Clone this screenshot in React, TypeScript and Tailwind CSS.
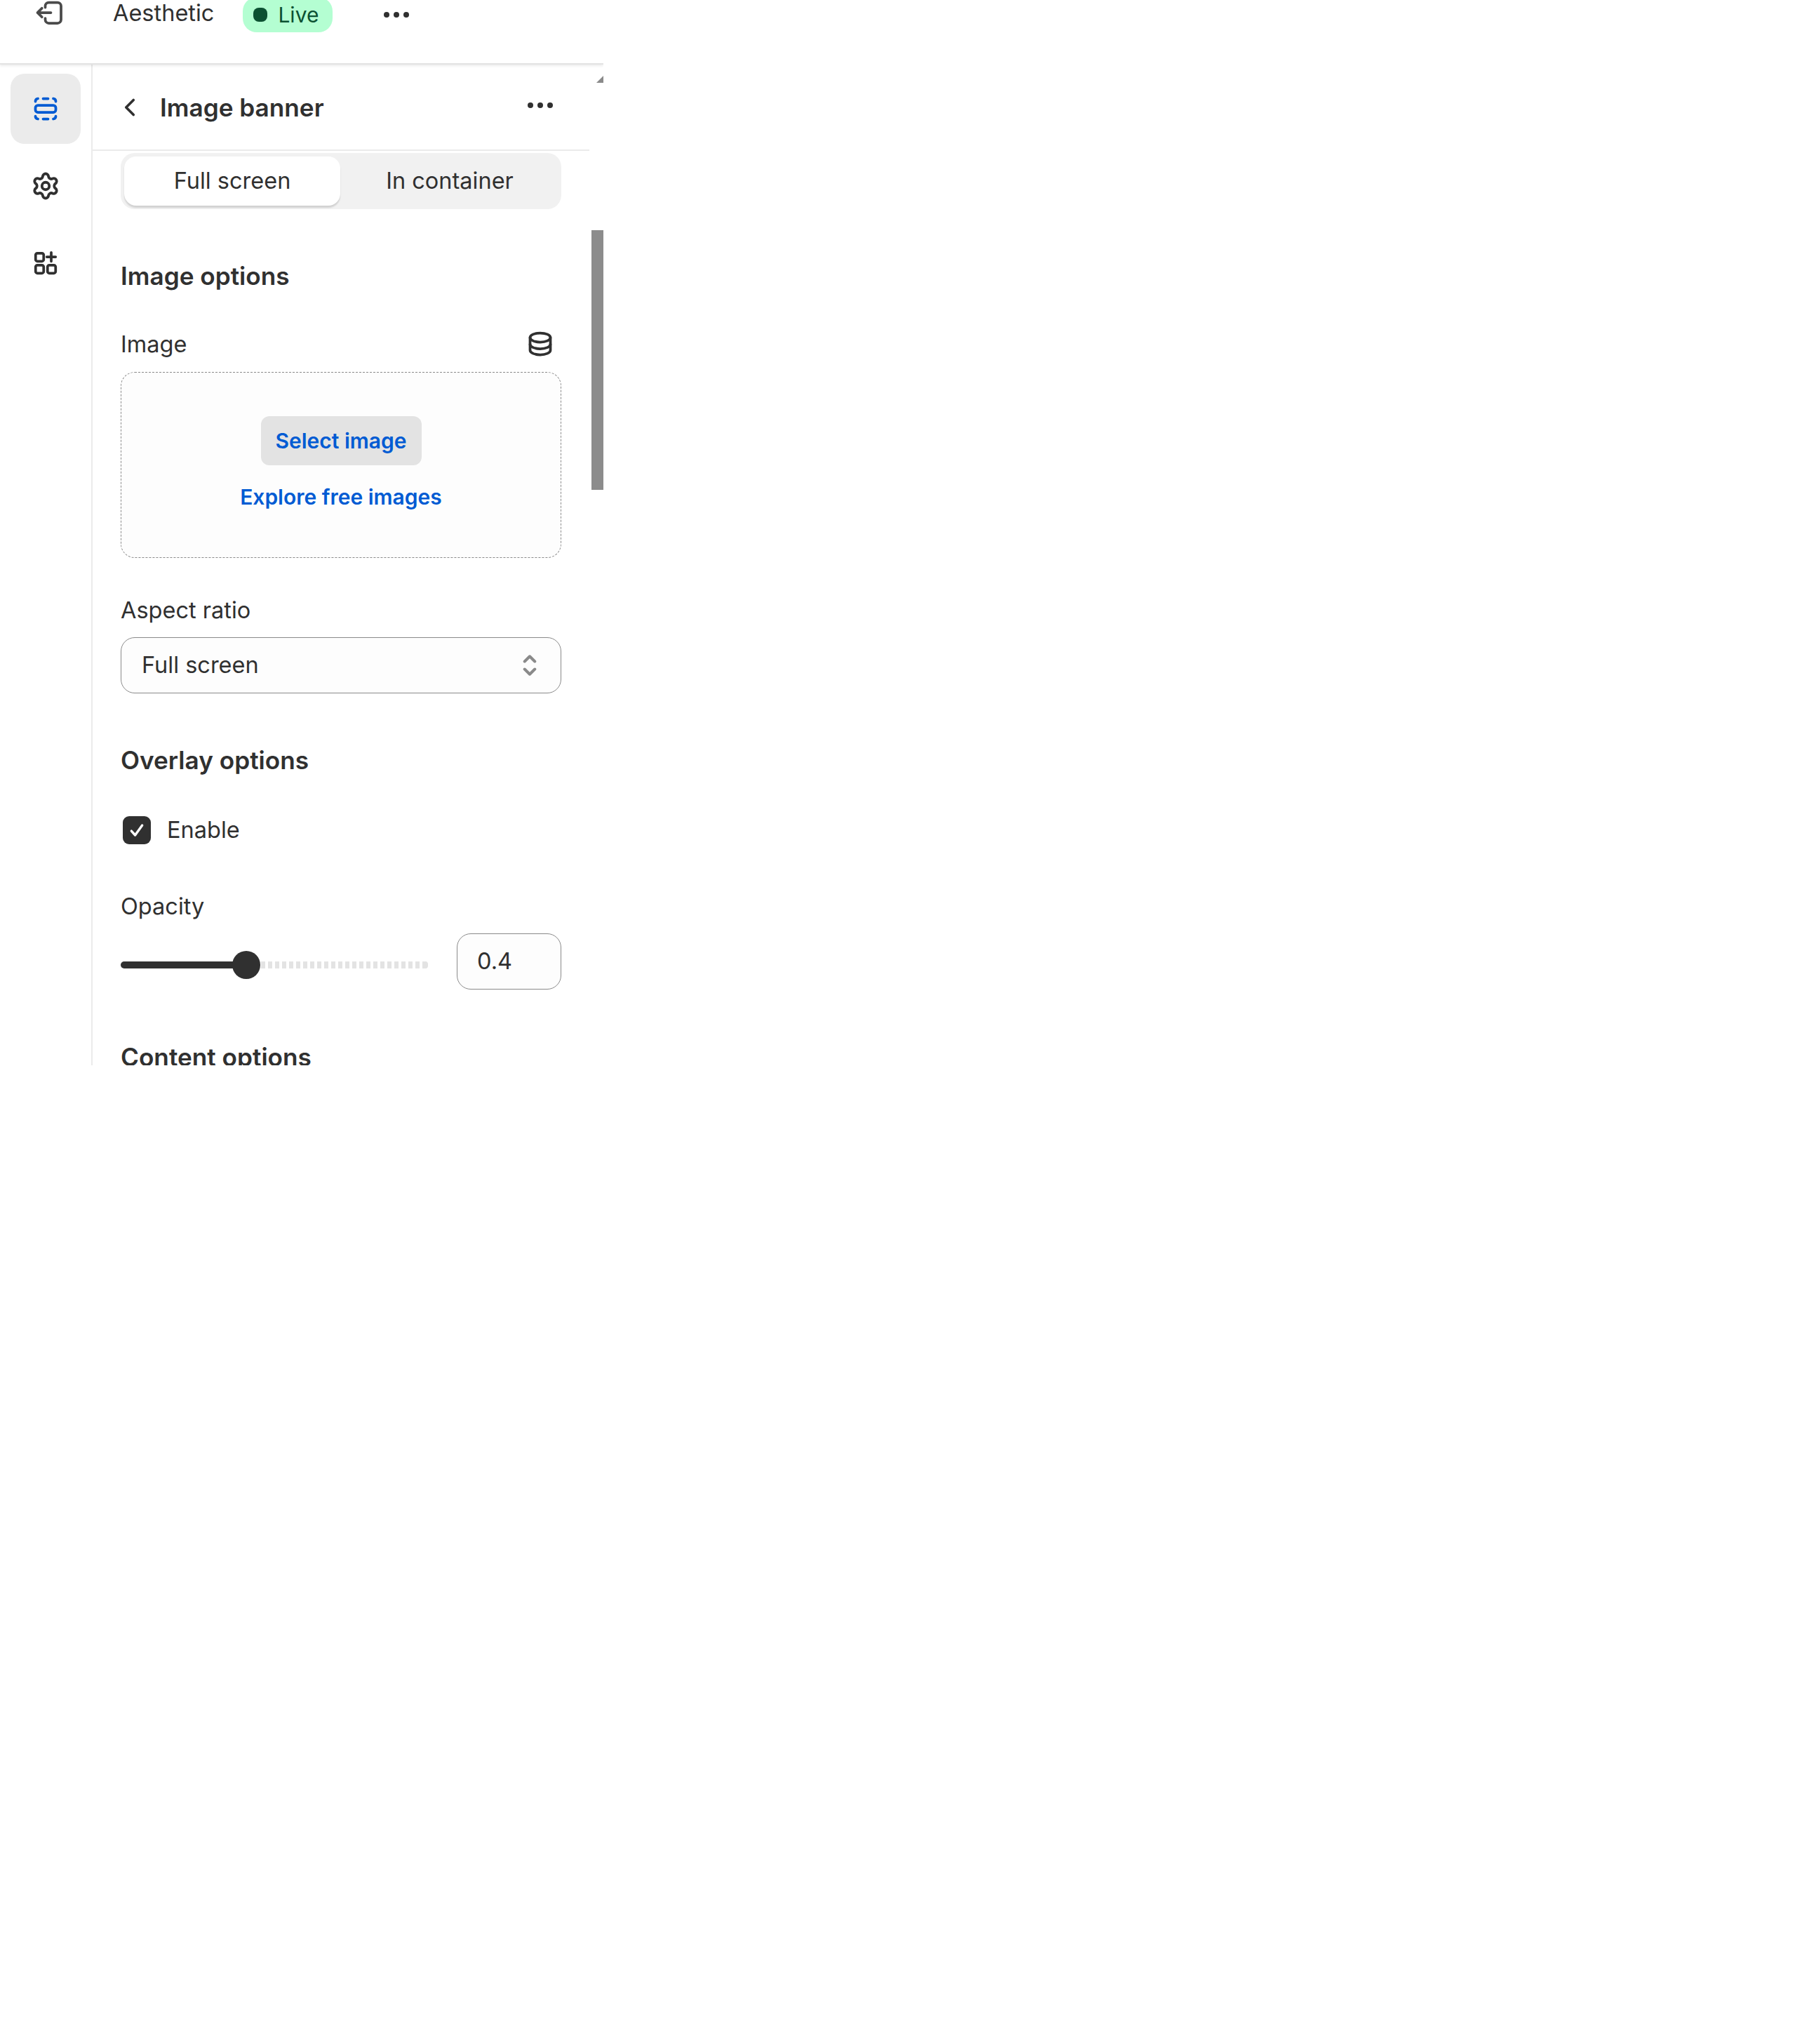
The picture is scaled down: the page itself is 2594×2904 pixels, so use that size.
import React from 'react';
import { ChevronLeft, Settings } from 'lucide-react';

const Dots = () => (
  <div className="flex gap-[6px]">
    <span className="w-[8px] h-[8px] rounded-full bg-[#303030]" />
    <span className="w-[8px] h-[8px] rounded-full bg-[#303030]" />
    <span className="w-[8px] h-[8px] rounded-full bg-[#303030]" />
  </div>
);

const ExitIcon = () => (
  <svg className="w-[50px] h-[50px] shrink-0" viewBox="0 0 20 20" fill="none" stroke="#4a4a4a" strokeWidth="1.5" strokeLinecap="round" strokeLinejoin="round">
    <path d="M7.8 7V6.2a2 2 0 0 1 2-2h5a2 2 0 0 1 2 2v7.8a2 2 0 0 1-2 2h-5a2 2 0 0 1-2-2v-.8" />
    <path d="M11 10H3.4M5.9 7.5 3.4 10l2.5 2.5" />
  </svg>
);

const SectionIcon = () => (
  <svg className="w-[50px] h-[50px]" viewBox="0 0 20 20" fill="none" stroke="#005bd3" strokeWidth="1.5" strokeLinecap="round">
    <rect x="4.2" y="8" width="11.6" height="4" rx="1.4" />
    <path d="M4.2 5.8c0-1 .5-1.5 1.4-1.6M8.6 4.2h2.8M14.4 4.2c.9.1 1.4.6 1.4 1.6" />
    <path d="M4.2 14.2c0 1 .5 1.5 1.4 1.6M8.6 15.8h2.8M14.4 15.8c.9-.1 1.4-.6 1.4-1.6" />
  </svg>
);

const AppsIcon = () => (
  <svg className="w-[50px] h-[50px]" viewBox="0 0 20 20" fill="none" stroke="#303030" strokeWidth="1.5" strokeLinecap="round">
    <rect x="4.3" y="4.3" width="4.6" height="4.6" rx="1" />
    <rect x="4.3" y="11.1" width="4.6" height="4.6" rx="1" />
    <rect x="11.1" y="11.1" width="4.6" height="4.6" rx="1" />
    <path d="M13.2 3.9v5M10.7 6.4h5" />
  </svg>
);

const DatabaseIcon = () => (
  <svg className="w-[50px] h-[50px]" viewBox="0 0 20 20" fill="none" stroke="#303030" strokeWidth="1.5" strokeLinecap="round">
    <ellipse cx="10" cy="6.4" rx="5.8" ry="2.6" />
    <path d="M4.2 6.4v7.2c0 1.5 2.6 2.6 5.8 2.6s5.8-1.1 5.8-2.6V6.4" />
    <path d="M4.2 10.2c0 1.5 2.6 2.6 5.8 2.6s5.8-1.1 5.8-2.6" />
  </svg>
);

const SelectorIcon = () => (
  <svg className="w-[50px] h-[50px]" viewBox="0 0 20 20" fill="none" stroke="#8a8a8a" strokeWidth="1.6" strokeLinecap="round" strokeLinejoin="round">
    <path d="M7.1 7.8 10 4.9l2.9 2.9" />
    <path d="M7.1 12.2 10 15.1l2.9-2.9" />
  </svg>
);

const ticks = Array.from({ length: 24 });

export default function App() {
  return (
    <div className="w-[860px] h-[1518px] overflow-hidden bg-white text-[#303030] text-[32.5px] leading-[50px] font-['Inter',sans-serif]">
      <header className="h-[92px] flex flex-col border-b-2 border-[#e3e3e3] shadow-[0_2px_3px_rgba(0,0,0,0.08)] relative z-10 bg-white">
        <div className="flex items-center h-[50px] -mt-[7px] pl-[45px]">
          <ExitIcon />
          <span className="ml-[66px] mt-[1px]">Aesthetic</span>
          <span className="ml-[41px] mt-[5px] flex items-center h-[50px] pl-[15px] pr-[20px] rounded-[20px] bg-[#b4fed2] text-[#0c5132] text-[30px]">
            <span className="w-[20px] h-[20px] rounded-[8px] bg-[#0c5132]" />
            <span className="ml-[15px]">Live</span>
          </span>
          <span className="ml-[73px] mt-[5px]"><Dots /></span>
        </div>
      </header>

      <div className="flex h-[1426px]">
        <aside className="w-[132px] shrink-0 border-r-2 border-[#ebebeb] pt-[13px] pl-[15px]">
          <div className="w-[100px] h-[100px] rounded-[20px] bg-[#ebebeb] flex items-center justify-center"><SectionIcon /></div>
          <div className="w-[100px] h-[100px] mt-[10px] flex items-center justify-center"><Settings size={42} strokeWidth={2.2} color="#303030" /></div>
          <div className="w-[100px] h-[100px] mt-[10px] flex items-center justify-center"><AppsIcon /></div>
        </aside>

        <main className="w-[708px] shrink-0">
          <div className="h-[123px] border-b-2 border-[#ebebeb] flex items-center pl-[40px] pr-[52px]">
            <ChevronLeft size={42} strokeWidth={2.1} color="#303030" className="-ml-[8px]" />
            <h1 className="ml-[22px] flex-1 text-[35.2px] font-semibold">Image banner</h1>
            <span className="-mt-[6px]"><Dots /></span>
          </div>

          <div className="pl-[40px] w-[668px]">
            <div className="mt-[3px] h-[80px] rounded-[20px] bg-[#f1f1f1] flex p-[5px]">
              <div className="w-[308px] rounded-[17px] bg-white shadow-[0_3px_2px_rgba(0,0,0,0.13)] flex items-center justify-center">Full screen</div>
              <div className="flex-1 flex items-center justify-center pl-[2px]">In container</div>
            </div>

            <h2 className="mt-[70px] text-[35.2px] font-semibold">Image options</h2>

            <div className="mt-[47px] h-[50px] flex items-center justify-between">
              <span className="mt-[2px]">Image</span>
              <span className="mr-[5px] -mt-[1px]"><DatabaseIcon /></span>
            </div>
            <div className="mt-[15px] h-[265px] rounded-[20px] border border-dashed border-[#8a8a8a] bg-[#fdfdfd] flex flex-col items-center pt-[62px] text-[30px]">
              <button className="w-[229px] h-[70px] rounded-[12px] bg-[#e3e3e3] text-[#005bd3] font-semibold">Select image</button>
              <a className="mt-[20px] text-[#005bd3] font-semibold" href="#">Explore free images</a>
            </div>

            <div className="mt-[50px]">Aspect ratio</div>
            <div className="mt-[13px] h-[80px] rounded-[20px] border border-[#8a8a8a] bg-[#fdfdfd] flex items-center justify-between pl-[29px] pr-[19px]">
              <span>Full screen</span>
              <SelectorIcon />
            </div>

            <h2 className="mt-[70px] text-[35.2px] font-semibold">Overlay options</h2>

            <label className="mt-[50px] flex items-center pl-[3px]">
              <span className="w-[40px] h-[40px] rounded-[9px] bg-[#303030] flex items-center justify-center">
                <svg className="w-[28px] h-[28px]" viewBox="0 0 20 20" fill="none" stroke="white" strokeWidth="2.4" strokeLinecap="round" strokeLinejoin="round">
                  <path d="M4.5 10.8 8.3 15l7.2-10" />
                </svg>
              </span>
              <span className="ml-[23px]">Enable</span>
            </label>

            <div className="mt-[59px]">Opacity</div>
            <div className="mt-[13px] flex items-start justify-between">
              <div className="mt-[25px] flex items-center w-[440px]">
                <div className="w-[170px] h-[10px] rounded-l-full bg-[#303030]" />
                <div className="w-[40px] h-[40px] rounded-full bg-[#303030] shrink-0 -ml-[11px]" />
                <div className="flex gap-[4px] ml-[1px]">
                  {ticks.map((_, i) => (
                    <span key={i} className="w-[6px] h-[10px] bg-[#e3e3e3]" />
                  ))}
                  <span className="w-[4px] h-[10px] rounded-r-full bg-[#e3e3e3] -ml-[6px]" />
                </div>
              </div>
              <div className="w-[149px] h-[80px] rounded-[20px] border border-[#8a8a8a] bg-[#fdfdfd] flex items-center pl-[28px]">0.4</div>
            </div>

            <h2 className="mt-[71px] text-[35.2px] font-semibold">Content options</h2>
          </div>
        </main>

        <div className="w-[20px] shrink-0 flex flex-col items-end">
          <div className="mt-[16px] w-0 h-0 border-l-[10px] border-l-transparent border-b-[10px] border-b-[#8a8a8a]" />
          <div className="mt-[210px] w-[17px] h-[370px] bg-[#8c8c8c]" />
        </div>
      </div>
    </div>
  );
}
